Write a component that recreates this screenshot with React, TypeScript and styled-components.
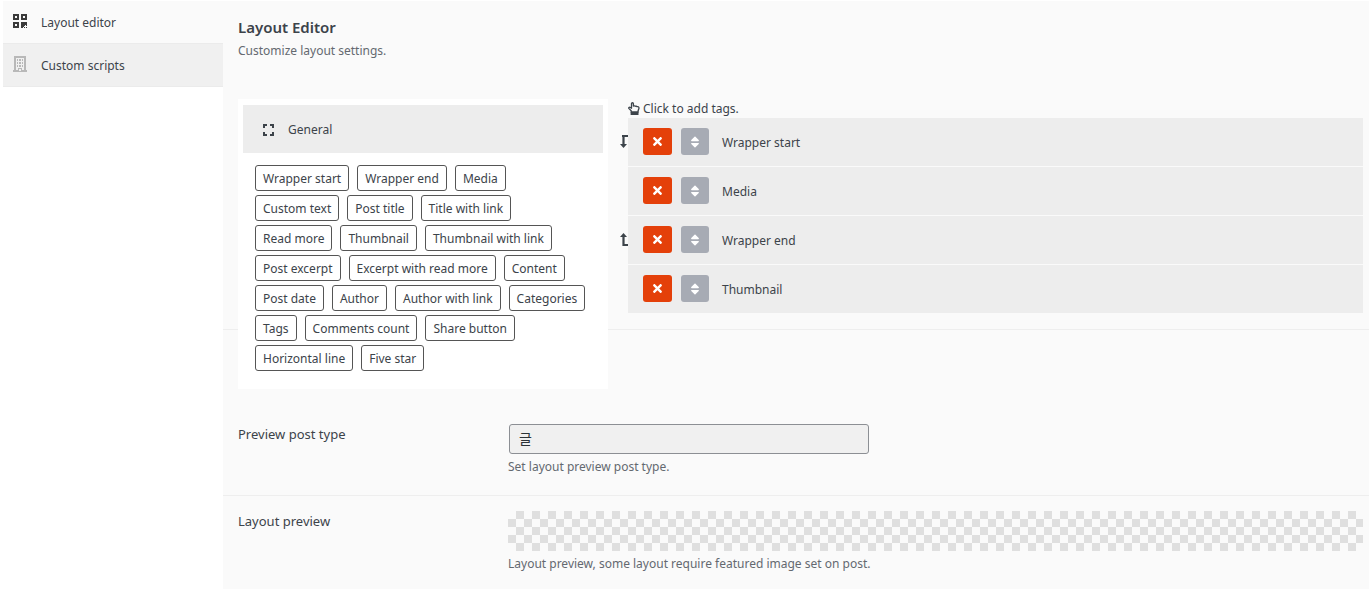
import React from "react";
import styled, { createGlobalStyle } from "styled-components";
import { FaTimes, FaSort } from "react-icons/fa";

const Global = createGlobalStyle`
  *, *::before, *::after { box-sizing: border-box; }
  body {
    margin: 0;
    background: #fff;
    color: #3c434a;
    font: 12px/18px "Noto Sans", "Open Sans", "Noto Sans CJK KR", sans-serif;
  }
  h2, p, ul { margin: 0; padding: 0; }
  ul { list-style: none; }
  button, select { font: inherit; color: inherit; }
`;

const Page = styled.div`
  display: grid;
  grid-template-columns: 220px minmax(0, 1fr);
  min-height: 100vh;
  padding: 1px 0 0 3px;
`;

const Sidebar = styled.nav`
  display: flex;
  flex-direction: column;
`;

const Tab = styled.a<{ $active?: boolean }>`
  display: flex;
  align-items: center;
  gap: 14px;
  height: ${(p) => (p.$active ? 42 : 44)}px;
  padding: 1px 10px 0;
  border-style: solid;
  border-color: #ebebeb;
  border-width: ${(p) => (p.$active ? "0" : "1px 0")};
  background: ${(p) => (p.$active ? "#fafafa" : "#f0f0f0")};
  color: #3c434a;
  text-decoration: none;
  svg { flex: none; margin-bottom: 3px; }
`;

const Main = styled.main`
  background: #fafafa;
`;

const Header = styled.header`
  height: 83px;
  padding: 16px 15px 0;
`;

const Title = styled.h2`
  margin-bottom: 2px;
  font-size: 15px;
  line-height: 20px;
  font-weight: 600;
`;

const Note = styled.p`
  color: #646970;
  line-height: 24px;
`;

const FieldNote = styled(Note)`
  line-height: 26px;
`;

const Editor = styled.section`
  display: grid;
  grid-template-columns: 370px minmax(0, 1fr);
  gap: 20px;
  padding: 15px 6px 16px 15px;
  border-bottom: 1px solid #eee;
`;

const Palette = styled.div`
  position: relative;
  z-index: 1;
  height: 290px;
  margin-bottom: -76px;
  padding: 6px 5px;
  background: #fff;
`;

const PaletteHead = styled.div`
  display: flex;
  align-items: center;
  gap: 13px;
  height: 48px;
  padding: 1px 19px 0;
  background: #ededed;
`;

const TagList = styled.div`
  display: flex;
  flex-wrap: wrap;
  gap: 4px 8px;
  padding: 12px 12px 0;
`;

const Tag = styled.button`
  height: 26px;
  padding: 2px 7px 0;
  border: 1px solid #555;
  border-radius: 3px;
  background: #fff;
  cursor: pointer;
`;

const Hint = styled.p`
  display: flex;
  align-items: center;
  gap: 3px;
  height: 19px;
`;

const Rows = styled.ul`
  display: grid;
  gap: 1px;
`;

const Row = styled.li`
  position: relative;
  display: flex;
  align-items: flex-start;
  height: 48px;
  padding: 10px 0 0 15px;
  background: #ededed;
`;

const RowName = styled.span`
  line-height: 30px;
`;

const Marker = styled.svg`
  position: absolute;
  left: -8px;
  top: 17px;
`;

const Action = styled.button<{ $danger?: boolean }>`
  display: grid;
  place-items: center;
  width: ${(p) => (p.$danger ? 29 : 28)}px;
  height: 27px;
  margin-right: ${(p) => (p.$danger ? 9 : 13)}px;
  padding: 0;
  border: 0;
  border-radius: 3px;
  background: ${(p) => (p.$danger ? "#e4400a" : "#a7abb4")};
  color: #fff;
  cursor: pointer;
`;

const Field = styled.section<{ $first?: boolean }>`
  display: grid;
  grid-template-columns: 270px minmax(0, 1fr);
  padding: ${(p) => (p.$first ? "94px" : "15px")} 6px 15px 15px;
  border-bottom: ${(p) => (p.$first ? "1px solid #eee" : "0")};
`;

const Label = styled.label`
  font-size: 13px;
  line-height: 20px;
`;

const Select = styled.select`
  appearance: none;
  display: block;
  width: 360px;
  max-width: 100%;
  height: 30px;
  margin-left: 1px;
  padding: 0 9px;
  border: 1px solid #8c8f94;
  border-radius: 3px;
  background: #f0f0f0;
  color: #2c3338;
  font-size: 14px;
`;

const Checker = styled.div`
  height: 40px;
  background: repeating-conic-gradient(#fafafa 0 25%, #dfdfdf 0 50%) 8px 0 / 16px 16px;
`;

const tags = [
  "Wrapper start", "Wrapper end", "Media", "Custom text", "Post title", "Title with link",
  "Read more", "Thumbnail", "Thumbnail with link", "Post excerpt", "Excerpt with read more",
  "Content", "Post date", "Author", "Author with link", "Categories", "Tags",
  "Comments count", "Share button", "Horizontal line", "Five star",
];

const rows: { name: string; marker?: "start" | "end" }[] = [
  { name: "Wrapper start", marker: "start" },
  { name: "Media" },
  { name: "Wrapper end", marker: "end" },
  { name: "Thumbnail" },
];

const QrIcon = () => (
  <svg width="14" height="14" viewBox="0 0 14 14" fill="#3a3a3a" fillRule="evenodd" aria-hidden="true">
    <path d="M0 0h6v6H0zM2 2v2h2V2zM8 0h6v6H8zM10 2v2h2V2zM0 8h6v6H0zM2 10v2h2v-2zM8 8h6v4h-1v-1h-1v1h-1v1h-1v1H8zM11 13h1v1h-1zM13 13h1v1h-1z" />
  </svg>
);

const BuildingIcon = () => (
  <svg width="14" height="16" viewBox="0 0 14 16" fill="#b8b8b8" fillRule="evenodd" aria-hidden="true">
    <path d="M1 0h12v14h1v2H0v-2h1zM3 2v12h2v-2h4v2h2V2zM6 13v2h2v-2z" />
    <path d="M4 3h1v2H4zM6 3h2v2H6zM9 3h1v2H9zM4 6h1v2H4zM6 6h2v2H6zM9 6h1v2H9zM4 9h1v2H4zM6 9h2v2H6zM9 9h1v2H9z" />
  </svg>
);

const ExpandIcon = () => (
  <svg width="13" height="12" viewBox="0 0 13 12" fill="none" stroke="#3c434a" strokeWidth="2" aria-hidden="true">
    <path d="M2 4V1h3M8 1h3v3M11 8v3H8M5 11H2V8" />
  </svg>
);

const HandIcon = () => (
  <svg width="12" height="13" viewBox="0 0 12 13" fill="none" stroke="#3c434a" strokeWidth="1.3" strokeLinejoin="round" aria-hidden="true">
    <path d="M3.200 10V8.800L1 6.600c-.7-.8.3-1.900 1.200-1.200l1.300.8V1.700c0-1.300 1.900-1.300 1.900 0v2.400c.5-.5 1.500-.4 1.800.2.6-.4 1.400-.2 1.700.4 1-.4 2.100.2 2.100 1.300 0 1.200-.9 2-.9 3V10z" />
    <path d="M2.600 10h7.900v3H2.600z" fill="#3c434a" stroke="none" />
  </svg>
);

export default function App() {
  return (
    <>
      <Global />
      <Page>
        <Sidebar>
          <Tab href="#layout" $active><QrIcon />Layout editor</Tab>
          <Tab href="#scripts"><BuildingIcon />Custom scripts</Tab>
        </Sidebar>
        <Main>
          <Header>
            <Title>Layout Editor</Title>
            <Note>Customize layout settings.</Note>
          </Header>
          <Editor>
            <Palette>
              <PaletteHead><ExpandIcon />General</PaletteHead>
              <TagList>
                {tags.map((t) => <Tag key={t} type="button">{t}</Tag>)}
              </TagList>
            </Palette>
            <div>
              <Hint><HandIcon />Click to add tags.</Hint>
              <Rows>
                {rows.map((r) => (
                  <Row key={r.name}>
                    {r.marker && (
                      <Marker width="8" height="13" viewBox="0 0 8 13" fill="#3c434a" aria-hidden="true">
                        {r.marker === "start"
                          ? <path d="M2 0h6v2H4.600v7H7L3.500 13 0 9h2.400V2H2z" />
                          : <path d="M2.400 13H8v-2H4.600V4H7L3.500 0 0 4h2.400z" />}
                      </Marker>
                    )}
                    <Action type="button" $danger aria-label={`Remove ${r.name}`}><FaTimes size={13} /></Action>
                    <Action type="button" aria-label={`Move ${r.name}`}><FaSort size={14} /></Action>
                    <RowName>{r.name}</RowName>
                  </Row>
                ))}
              </Rows>
            </div>
          </Editor>
          <Field $first>
            <Label htmlFor="post-type">Preview post type</Label>
            <div>
              <Select id="post-type"><option>글</option></Select>
              <FieldNote>Set layout preview post type.</FieldNote>
            </div>
          </Field>
          <Field>
            <Label as="span">Layout preview</Label>
            <div>
              <Checker />
              <FieldNote>Layout preview, some layout require featured image set on post.</FieldNote>
            </div>
          </Field>
        </Main>
      </Page>
    </>
  );
}
